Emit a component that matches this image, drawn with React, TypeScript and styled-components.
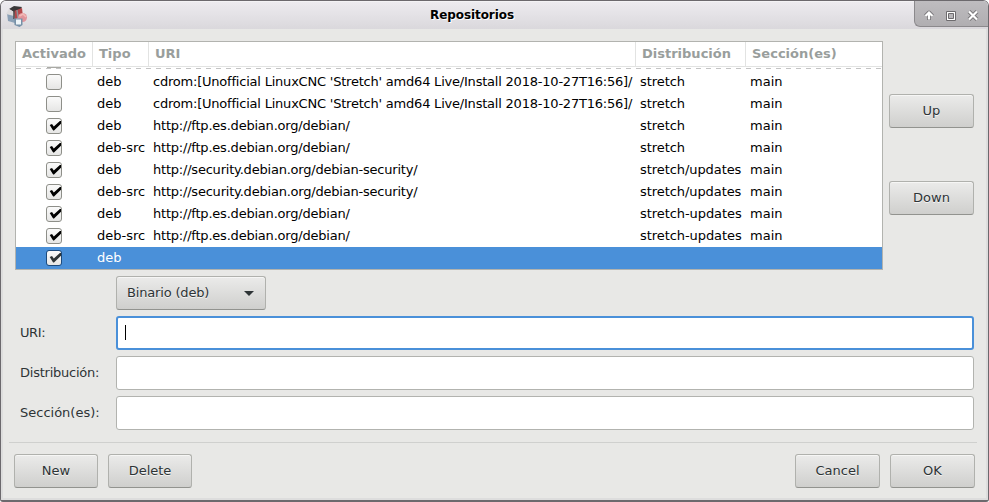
import React from "react";
import styled, { createGlobalStyle, css } from "styled-components";

const Global = createGlobalStyle`
  * { box-sizing: border-box; }
  body { margin: 0; background: #fff; font: 13px "DejaVu Sans", sans-serif; color: #2e3436; }
`;

const Window = styled.main`
  width: 989px;
  height: 502px;
  display: flex;
  flex-direction: column;
  overflow: hidden;
  background: #e8e8e6;
  border: 1px solid #6c696d;
  border-bottom-width: 2px;
  border-radius: 6px 6px 3px 3px;
`;

const TitleBar = styled.header`
  height: 28px;
  flex: none;
  display: grid;
  grid-template-columns: 30px 1fr 74px;
  background: linear-gradient(#edebef, #dad8dc);
  border-top: 1px solid #f4f3f5;
`;

const AppMark = styled.div`
  padding: 2px 0 0 4px;
  svg { display: block; }
`;

const Title = styled.h1`
  margin: 0;
  padding-right: 1px;
  font-size: 12px;
  line-height: 26px;
  letter-spacing: -0.08px;
  font-weight: bold;
  text-align: center;
  color: #000;
  text-shadow: 1px 1px #fff;
`;

const Controls = styled.div`
  height: 26px;
  margin-top: -1px;
  background: linear-gradient(#bebcbf, #b0aeb1);
  border: solid #8b898c;
  border-width: 0 0 1px 1px;
  border-bottom-left-radius: 6px;
  svg { display: block; }
`;

const Body = styled.div`
  flex: 1;
  display: flex;
  flex-direction: column;
  border: solid #dddddd;
  border-width: 0 2px 2px 2px;
`;

const Upper = styled.div`
  display: flex;
  gap: 6px;
  margin: 12px 12px 0 12px;
  height: 229px;
`;

const Table = styled.div`
  width: 868px;
  display: flex;
  flex-direction: column;
  overflow: hidden;
  background: #fff;
  border: 1px solid #b2b3af;
`;

const columns = css`
  display: grid;
  grid-template-columns: 77px 56px 487px 110px 1fr;
`;

const HeadRow = styled.div`
  ${columns}
  flex: none;
  height: 25px;
  border-bottom: 1px solid #e2e3e2;
`;

const Head = styled.div`
  padding-left: 6px;
  line-height: 24px;
  font-weight: bold;
  color: #999e9c;
  border-right: 1px solid #e2e3e2;
  white-space: nowrap;
  &:last-child { border-right: 0; }
`;

const Overflowed = styled.div`
  flex: none;
  height: 4px;
  display: flex;
  flex-direction: column;
`;

const PeekBox = styled.i`
  width: 14px;
  height: 1px;
  margin-left: 31px;
  background: #a9a9a4;
`;

const Dashes = styled.i`
  height: 1px;
  background: repeating-linear-gradient(90deg, #c4c4c4 0 5px, transparent 5px 10px);
`;

const Row = styled.div<{ $selected?: boolean }>`
  ${columns}
  flex: none;
  height: 22px;
  line-height: 21px;
  color: ${p => (p.$selected ? "#fff" : "#000")};
  background: ${p => (p.$selected ? "#4a90d9" : "#fff")};
`;

const Cell = styled.div<{ $track?: number }>`
  padding-left: 4px;
  white-space: pre;
  letter-spacing: ${p => p.$track ?? 0}px;
`;

const CheckCell = styled.div`
  padding: 3px 0 0 30px;
`;

const CheckBox = styled.div<{ $selected?: boolean }>`
  width: 16px;
  height: 16px;
  border: 1px solid ${p => (p.$selected ? "#1c4a7c" : "#8e8f89")};
  border-radius: 3px;
  background: linear-gradient(#fafafa, #e6e6e5);
  svg { display: block; overflow: visible; }
`;

const SideButtons = styled.div`
  display: flex;
  flex-direction: column;
  gap: 53px;
  padding-top: 53px;
`;

const Button = styled.button<{ $w: number }>`
  width: ${p => p.$w}px;
  height: 34px;
  padding: 0 0 1px;
  font: inherit;
  color: #2e3436;
  text-shadow: 0 1px #f4f4f3;
  background: linear-gradient(#ebebea, #cfcfcd);
  border: 1px solid #b0b1ad;
  border-bottom-color: #92938f;
  border-radius: 3px;
  box-shadow: inset 0 1px #f6f6f5;
`;

const Combo = styled(Button)`
  display: flex;
  align-items: center;
  justify-content: space-between;
  padding: 0 11px 1px 10px;
  letter-spacing: -0.17px;
  svg { margin-top: 2px; }
`;

const Form = styled.div`
  display: grid;
  grid-template-columns: 96px 858px;
  row-gap: 6px;
  margin: 6px 0 0 17px;
`;

const Label = styled.label<{ $track?: number }>`
  line-height: 33px;
  letter-spacing: ${p => p.$track ?? 0}px;
`;

const Entry = styled.div<{ $focus?: boolean }>`
  height: 34px;
  padding: 7px 7px;
  background: #fff;
  border: ${p => (p.$focus ? "2px solid #4a90d9" : "1px solid #b2b3af")};
  border-radius: 3px;
`;

const Caret = styled.i`
  display: block;
  width: 1px;
  height: 15px;
  background: #000;
`;

const Rule = styled.hr`
  width: 968px;
  height: 1px;
  margin: 12px 0 11px 6px;
  border: 0;
  background: #cfd0ce;
`;

const Actions = styled.footer`
  display: flex;
  gap: 10px;
  padding: 0 11px;
`;

const Spacer = styled.span`
  flex: 1;
`;

const rows: [boolean, string, string, string, string][] = [
  [false, "deb", "cdrom:[Unofficial LinuxCNC 'Stretch' amd64 Live/Install 2018-10-27T16:56]/", "stretch", "main"],
  [false, "deb", "cdrom:[Unofficial LinuxCNC 'Stretch' amd64 Live/Install 2018-10-27T16:56]/", "stretch", "main"],
  [true, "deb", "http://ftp.es.debian.org/debian/", "stretch", "main"],
  [true, "deb-src", "http://ftp.es.debian.org/debian/", "stretch", "main"],
  [true, "deb", "http://security.debian.org/debian-security/", "stretch/updates", "main"],
  [true, "deb-src", "http://security.debian.org/debian-security/", "stretch/updates", "main"],
  [true, "deb", "http://ftp.es.debian.org/debian/", "stretch-updates", "main"],
  [true, "deb-src", "http://ftp.es.debian.org/debian/", "stretch-updates", "main"],
  [true, "deb", "", "", ""],
];

const PackageIcon = () => (
  <svg width="24" height="24" viewBox="0 0 24 24">
    <path d="M2 9 8 10 10 19 3 17Z" fill="#8ba0b6" />
    <path d="M4 5 9 2 17 3 15 6 9 8Z" fill="#3a3839" />
    <path d="M9 7 17 4 18 13 10 15Z" fill="#b5474a" />
    <path d="M12 6 13 14" stroke="#8f9298" strokeWidth="1.5" />
    <path d="M1 10 4 5 9 8 9 12Z" fill="#dddbdd" />
    <path d="M9 7v8" stroke="#4a4446" strokeWidth="1.5" />
    <circle cx="17.500" cy="13.500" r="4.500" fill="#e0949b" />
    <path d="M14.5 12 18 10 21 13" stroke="#f3b9b6" strokeWidth="1.5" fill="none" />
    <path d="M9 14.500h8.500V21l-3 2-5-2Z" fill="#7791a8" />
    <path d="M11 15.500h5v5h-5Z" fill="#eef4f8" />
  </svg>
);

const ControlIcons = () => (
  <svg width="72" height="25" viewBox="0 0 72 25">
    <g fill="none" stroke="#7a787b" strokeWidth="4" strokeLinejoin="round">
      <path d="M14 19V12M10.500 15 14 11.500 17.500 15" />
      <path d="M54 10.500l8 8m0-8l-8 8" />
    </g>
    <g fill="none" stroke="#fff" strokeWidth="2.2">
      <path d="M14 18.500V12M10.500 15 14 11.500 17.500 15" />
      <path d="M54 10.500l8 8m0-8l-8 8" />
    </g>
    <path d="M31.5 10.5h9v9h-9z" fill="#fff" stroke="#6d6b6e" />
    <path d="M33.5 12.5h5v5h-5z" fill="#b8b6b9" stroke="#6d6b6e" />
  </svg>
);

const Check = ({ soft }: { soft?: boolean }) => (
  <svg width="14" height="14" viewBox="0 0 14 14">
    <path d="M2.700 6 5 5.100 6.800 7.500 12.900 2H14V4.700L7 11.400H6.100Z" fill={soft ? "#2e3436" : "#000"} />
  </svg>
);

export default function App() {
  return (
    <>
      <Global />
      <Window>
        <TitleBar>
          <AppMark><PackageIcon /></AppMark>
          <Title>Repositorios</Title>
          <Controls><ControlIcons /></Controls>
        </TitleBar>
        <Body>
          <Upper>
            <Table>
              <HeadRow>
                {["Activado", "Tipo", "URI", "Distribución", "Sección(es)"].map(h => <Head key={h}>{h}</Head>)}
              </HeadRow>
              <Overflowed><PeekBox /><Dashes /></Overflowed>
              {rows.map(([on, type, uri, dist, section], i) => {
                const selected = i === rows.length - 1;
                return (
                  <Row key={i} $selected={selected}>
                    <CheckCell><CheckBox $selected={selected}>{on && <Check soft={selected} />}</CheckBox></CheckCell>
                    <Cell>{type}</Cell>
                    <Cell $track={-0.212}>{uri}</Cell>
                    <Cell $track={-0.07}>{dist}</Cell>
                    <Cell>{section}</Cell>
                  </Row>
                );
              })}
            </Table>
            <SideButtons>
              <Button $w={85}>Up</Button>
              <Button $w={85}>Down</Button>
            </SideButtons>
          </Upper>
          <Form>
            <span />
            <Combo $w={150}>
              Binario (deb)
              <svg width="10" height="5" viewBox="0 0 10 5"><path d="M0 0h10L5 5z" fill="#2e3436" /></svg>
            </Combo>
            <Label $track={-0.4}>URI:</Label>
            <Entry $focus><Caret /></Entry>
            <Label $track={-0.24}>Distribución:</Label>
            <Entry />
            <Label>Sección(es):</Label>
            <Entry />
          </Form>
          <Rule />
          <Actions>
            <Button $w={84}>New</Button>
            <Button $w={84}>Delete</Button>
            <Spacer />
            <Button $w={85}>Cancel</Button>
            <Button $w={85}>OK</Button>
          </Actions>
        </Body>
      </Window>
    </>
  );
}
